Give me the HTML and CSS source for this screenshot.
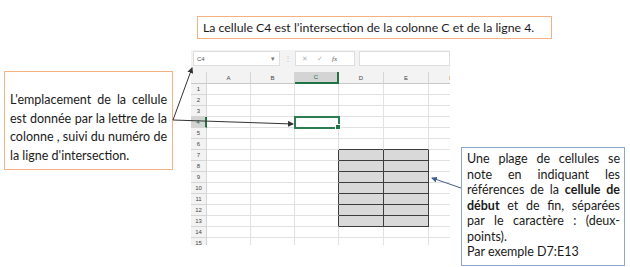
FILE: index.html
```html
<!DOCTYPE html>
<html lang="fr">
<head>
  <meta charset="UTF-8" />
  <meta name="viewport" content="width=device-width, initial-scale=1.0" />
  <title>Cellules et plages</title>
  <link rel="stylesheet" href="styles.css">
</head>
<body>
  <div class="stage">
    <div class="note note-top">La cellule C4 est l’intersection de la colonne C et de la ligne 4.</div>

    <div class="note note-left">L'emplacement de la cellule est donnée par la lettre de la colonne , suivi du numéro de la ligne d'intersection.</div>

    <div class="note note-right">Une plage de cellules se note en indiquant les références de la <b>cellule de début</b> et de fin, séparées par le caractère : (deux-points).<br>Par exemple D7:E13</div>

    <div class="sheet">
      <div class="fbar">
        <div class="namebox"><span>C4</span><span class="caret">▾</span></div>
        <span class="dots">⋮</span>
        <div class="fbtns"><span>✕</span><span>✓</span><span class="fx">fx</span></div>
        <div class="finput"></div>
      </div>
      <table class="grid">
        <colgroup>
          <col style="width:16px"><col style="width:44px"><col style="width:44px"><col style="width:44px"><col style="width:45px"><col style="width:45px"><col style="width:45px">
        </colgroup>
        <tr class="head"><th class="corner"></th><th>A</th><th>B</th><th class="on">C</th><th>D</th><th>E</th><th>F</th></tr>
        <tr><th>1</th><td></td><td></td><td></td><td></td><td></td><td></td></tr>
        <tr><th>2</th><td></td><td></td><td></td><td></td><td></td><td></td></tr>
        <tr><th>3</th><td></td><td></td><td></td><td></td><td></td><td></td></tr>
        <tr><th class="on">4</th><td></td><td></td><td class="sel"></td><td></td><td></td><td></td></tr>
        <tr><th>5</th><td></td><td></td><td></td><td></td><td></td><td></td></tr>
        <tr><th>6</th><td></td><td></td><td></td><td class="rt"></td><td class="rt"></td><td></td></tr>
        <tr><th>7</th><td></td><td></td><td class="rl"></td><td class="rg"></td><td class="rg"></td><td></td></tr>
        <tr><th>8</th><td></td><td></td><td class="rl"></td><td class="rg"></td><td class="rg"></td><td></td></tr>
        <tr><th>9</th><td></td><td></td><td class="rl"></td><td class="rg"></td><td class="rg"></td><td></td></tr>
        <tr><th>10</th><td></td><td></td><td class="rl"></td><td class="rg"></td><td class="rg"></td><td></td></tr>
        <tr><th>11</th><td></td><td></td><td class="rl"></td><td class="rg"></td><td class="rg"></td><td></td></tr>
        <tr><th>12</th><td></td><td></td><td class="rl"></td><td class="rg"></td><td class="rg"></td><td></td></tr>
        <tr><th>13</th><td></td><td></td><td class="rl"></td><td class="rg"></td><td class="rg"></td><td></td></tr>
        <tr><th>14</th><td></td><td></td><td></td><td></td><td></td><td></td></tr>
        <tr><th>15</th><td></td><td></td><td></td><td></td><td></td><td></td></tr>
      </table>
    </div>

    <svg class="arrows" width="630" height="267" viewBox="0 0 630 267">
      <defs>
        <marker id="head" markerWidth="6" markerHeight="6" refX="5" refY="3" orient="auto" markerUnits="userSpaceOnUse">
          <path d="M0,0 L6,3 L0,6 z" fill="#333"/>
        </marker>
        <marker id="head-blue" markerWidth="6" markerHeight="6" refX="5" refY="3" orient="auto" markerUnits="userSpaceOnUse">
          <path d="M0,0 L6,3 L0,6 z" fill="#3e5f8a"/>
        </marker>
      </defs>
      <line x1="173" y1="120" x2="192" y2="68" stroke="#333" stroke-width="1" marker-end="url(#head)"/>
      <line x1="173" y1="120" x2="293" y2="124" stroke="#333" stroke-width="1" marker-end="url(#head)"/>
      <line x1="461" y1="188" x2="432" y2="178" stroke="#3e5f8a" stroke-width="1" marker-end="url(#head-blue)"/>
    </svg>
  </div>
</body>
</html>
```

FILE: styles.css
```css
body {
  margin: 0;
  background: #ffffff;
  font-family: Lato, "Open Sans", sans-serif;
  color: #1a1a1a;
}
.stage {
  position: relative;
  width: 630px;
  height: 267px;
  overflow: hidden;
}
.note {
  position: absolute;
  box-sizing: border-box;
  background: #fff;
  font-size: 12.5px;
  z-index: 2;
}
.note-top {
  left: 197px;
  top: 16px;
  width: 355px;
  height: 23px;
  border: 1px solid #f4b183;
  padding: 3px 5px;
  line-height: 15px;
  font-size: 12.3px;
}
.note-left {
  left: 4px;
  top: 71px;
  width: 169px;
  height: 99px;
  border: 1px solid #f4b183;
  padding: 19px 5px 0;
  line-height: 18.5px;
  text-align: justify;
}
.note-right {
  left: 461px;
  top: 147px;
  width: 164px;
  height: 119px;
  border: 1px solid #8ea6c8;
  padding: 3px 4px 0 5px;
  line-height: 15.5px;
  text-align: justify;
}
.arrows {
  position: absolute;
  left: 0;
  top: 0;
  z-index: 3;
  pointer-events: none;
}

/* spreadsheet */
.sheet {
  margin: 50px 0 0 191px;
  width: 259px;
  height: 195px;
  overflow: hidden;
  font-family: "Liberation Sans", Arial, sans-serif;
  background: #fff;
}
.fbar {
  display: flex;
  align-items: center;
  gap: 4px;
  height: 22px;
  padding: 0 0 5px 2px;
  box-sizing: border-box;
  background: #f3f3f3;
  font-size: 6px;
  color: #8a8a8a;
}
.namebox {
  display: flex;
  justify-content: space-between;
  align-items: center;
  box-sizing: border-box;
  width: 87px;
  height: 15px;
  padding: 0 4px 0 3px;
  background: #fff;
  border: 1px solid #dedede;
  color: #555;
}
.caret { font-size: 7px; color: #777; }
.dots { color: #c2c2c2; font-size: 8px; width: 7px; text-align: center; }
.fbtns {
  display: flex;
  align-items: center;
  gap: 9px;
  box-sizing: border-box;
  width: 60px;
  height: 15px;
  padding: 0 6px;
  background: #fff;
  border: 1px solid #dedede;
  color: #b5b5b5;
  font-size: 7px;
}
.fbtns .fx { font-style: italic; color: #555; font-family: "Liberation Serif", serif; }
.finput {
  flex: 1;
  height: 15px;
  box-sizing: border-box;
  background: #fff;
  border: 1px solid #dedede;
}
.grid {
  border-collapse: separate;
  border-spacing: 0;
  table-layout: fixed;
  width: 283px;
}
.grid tr { height: 11px; }
.grid td,
.grid th {
  box-sizing: border-box;
  height: 11px;
  padding: 0;
  border-right: 1px solid #e1e1e1;
  border-bottom: 1px solid #e1e1e1;
}
.grid th {
  background: #f3f3f3;
  border-color: #d6d6d6;
  color: #444;
  font-size: 6px;
  font-weight: normal;
  line-height: 10px;
}
.grid tr.head { height: 12px; }
.grid tr.head th {
  height: 12px;
  border-bottom: 1px solid #c8c8c8;
}
.grid th.corner { background: #f3f3f3; }
.grid tr.head th.on {
  background: #d4d4d4;
  color: #217346;
  border-bottom: 2px solid #217346;
}
.grid th.on {
  background: #d4d4d4;
  color: #217346;
  border-right: 2px solid #217346;
}
.grid td.sel {
  position: relative;
  outline: 2px solid #2e7d50;
  outline-offset: -1px;
}
.grid td.sel::after {
  content: "";
  position: absolute;
  right: -3px;
  bottom: -3px;
  width: 4px;
  height: 4px;
  background: #217346;
  border: 1px solid #fff;
}
.grid td.rg {
  background: #d9d9d9;
  border-color: #3c3c3c;
}
.grid td.rl { border-right-color: #3c3c3c; }
.grid td.rt { border-bottom-color: #3c3c3c; }
```
